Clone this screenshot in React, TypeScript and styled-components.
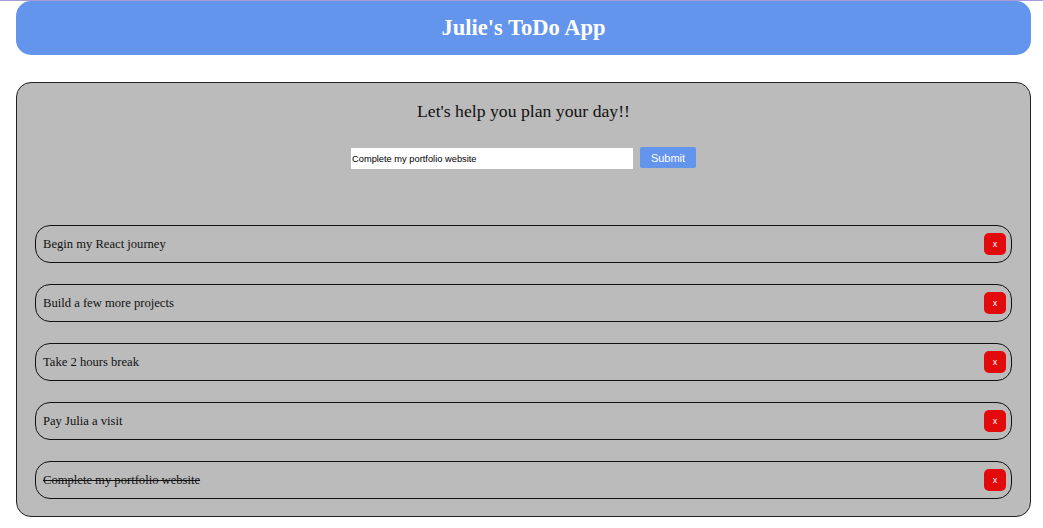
import React, { useState } from 'react';
import styled, { createGlobalStyle } from 'styled-components';

const GlobalStyle = createGlobalStyle`
    html, body {
        margin: 0;
        padding: 0;
        background: #fff;
        font-family: "Liberation Serif", "Times New Roman", serif;
    }
    body {
        border-top: 1px solid #a99bd9;
    }
`;

const Page = styled.div`
    padding: 0 12px 10px 16px;
`;

const Header = styled.header`
    height: 54px;
    background-color: #6495ed;
    border-radius: 15px;
    display: flex;
    align-items: center;
    justify-content: center;
`;

const Title = styled.h1`
    margin: 0;
    color: #fff;
    font-size: 22.5px;
    font-weight: bold;
`;

const Panel = styled.main`
    margin-top: 27px;
    background-color: #bbbbbb;
    border: 1px solid #222;
    border-radius: 15px;
    padding: 18px 18px 17px 18px;
`;

const Heading = styled.h2`
    margin: 0;
    text-align: center;
    font-size: 17.7px;
    font-weight: normal;
    color: #111;
`;

const Form = styled.form`
    display: flex;
    justify-content: center;
    align-items: flex-start;
    gap: 7px;
    margin-top: 25px;
    margin-bottom: 56px;
`;

const Input = styled.input`
    width: 282px;
    height: 21px;
    box-sizing: border-box;
    border: none;
    padding: 0 1px;
    margin-top: 1px;
    font-family: "Liberation Sans", Arial, sans-serif;
    font-size: 9.3px;
    color: #000;
    outline: none;
`;

const SubmitButton = styled.button`
    width: 56px;
    height: 21px;
    border: none;
    border-radius: 2px;
    background-color: #6495ed;
    color: #fff;
    font-family: "Liberation Sans", Arial, sans-serif;
    font-size: 11px;
    cursor: pointer;
`;

const List = styled.ul`
    list-style: none;
    margin: 0;
    padding: 0;
    display: flex;
    flex-direction: column;
    gap: 21px;
`;

const Item = styled.li`
    height: 38px;
    box-sizing: border-box;
    border: 1px solid #111;
    border-radius: 15px;
    display: flex;
    align-items: center;
    justify-content: space-between;
    padding: 0 5px 0 7px;
`;

const ItemText = styled.span<{ $done: boolean }>`
    font-size: 12.6px;
    color: #111;
    text-decoration: ${({ $done }) => ($done ? 'line-through' : 'none')};
    cursor: pointer;
`;

const DeleteButton = styled.button`
    width: 22px;
    height: 22px;
    border: none;
    border-radius: 5px;
    background-color: #e20a0a;
    color: #fff;
    font-family: "Liberation Sans", Arial, sans-serif;
    font-size: 9px;
    padding: 0;
    cursor: pointer;
`;

interface Todo {
    text: string;
    done: boolean;
}

const initialTodos: Todo[] = [
    { text: 'Begin my React journey', done: false },
    { text: 'Build a few more projects', done: false },
    { text: 'Take 2 hours break', done: false },
    { text: 'Pay Julia a visit', done: false },
    { text: 'Complete my portfolio website', done: true },
];

const App = () => {
    const [todos, setTodos] = useState<Todo[]>(initialTodos);
    const [value, setValue] = useState('Complete my portfolio website');

    const handleSubmit = (e: React.FormEvent) => {
        e.preventDefault();
        if (!value.trim()) return;
        setTodos([...todos, { text: value, done: false }]);
        setValue('');
    };

    const toggle = (index: number) =>
        setTodos(todos.map((t, i) => (i === index ? { ...t, done: !t.done } : t)));

    const remove = (index: number) => setTodos(todos.filter((_, i) => i !== index));

    return (
        <Page>
            <GlobalStyle />
            <Header>
                <Title>Julie's ToDo App</Title>
            </Header>
            <Panel>
                <Heading>Let's help you plan your day!!</Heading>
                <Form onSubmit={handleSubmit}>
                    <Input value={value} onChange={(e) => setValue(e.target.value)} />
                    <SubmitButton type="submit">Submit</SubmitButton>
                </Form>
                <List>
                    {todos.map((todo, index) => (
                        <Item key={index}>
                            <ItemText $done={todo.done} onClick={() => toggle(index)}>
                                {todo.text}
                            </ItemText>
                            <DeleteButton onClick={() => remove(index)}>x</DeleteButton>
                        </Item>
                    ))}
                </List>
            </Panel>
        </Page>
    );
};

export default App;
